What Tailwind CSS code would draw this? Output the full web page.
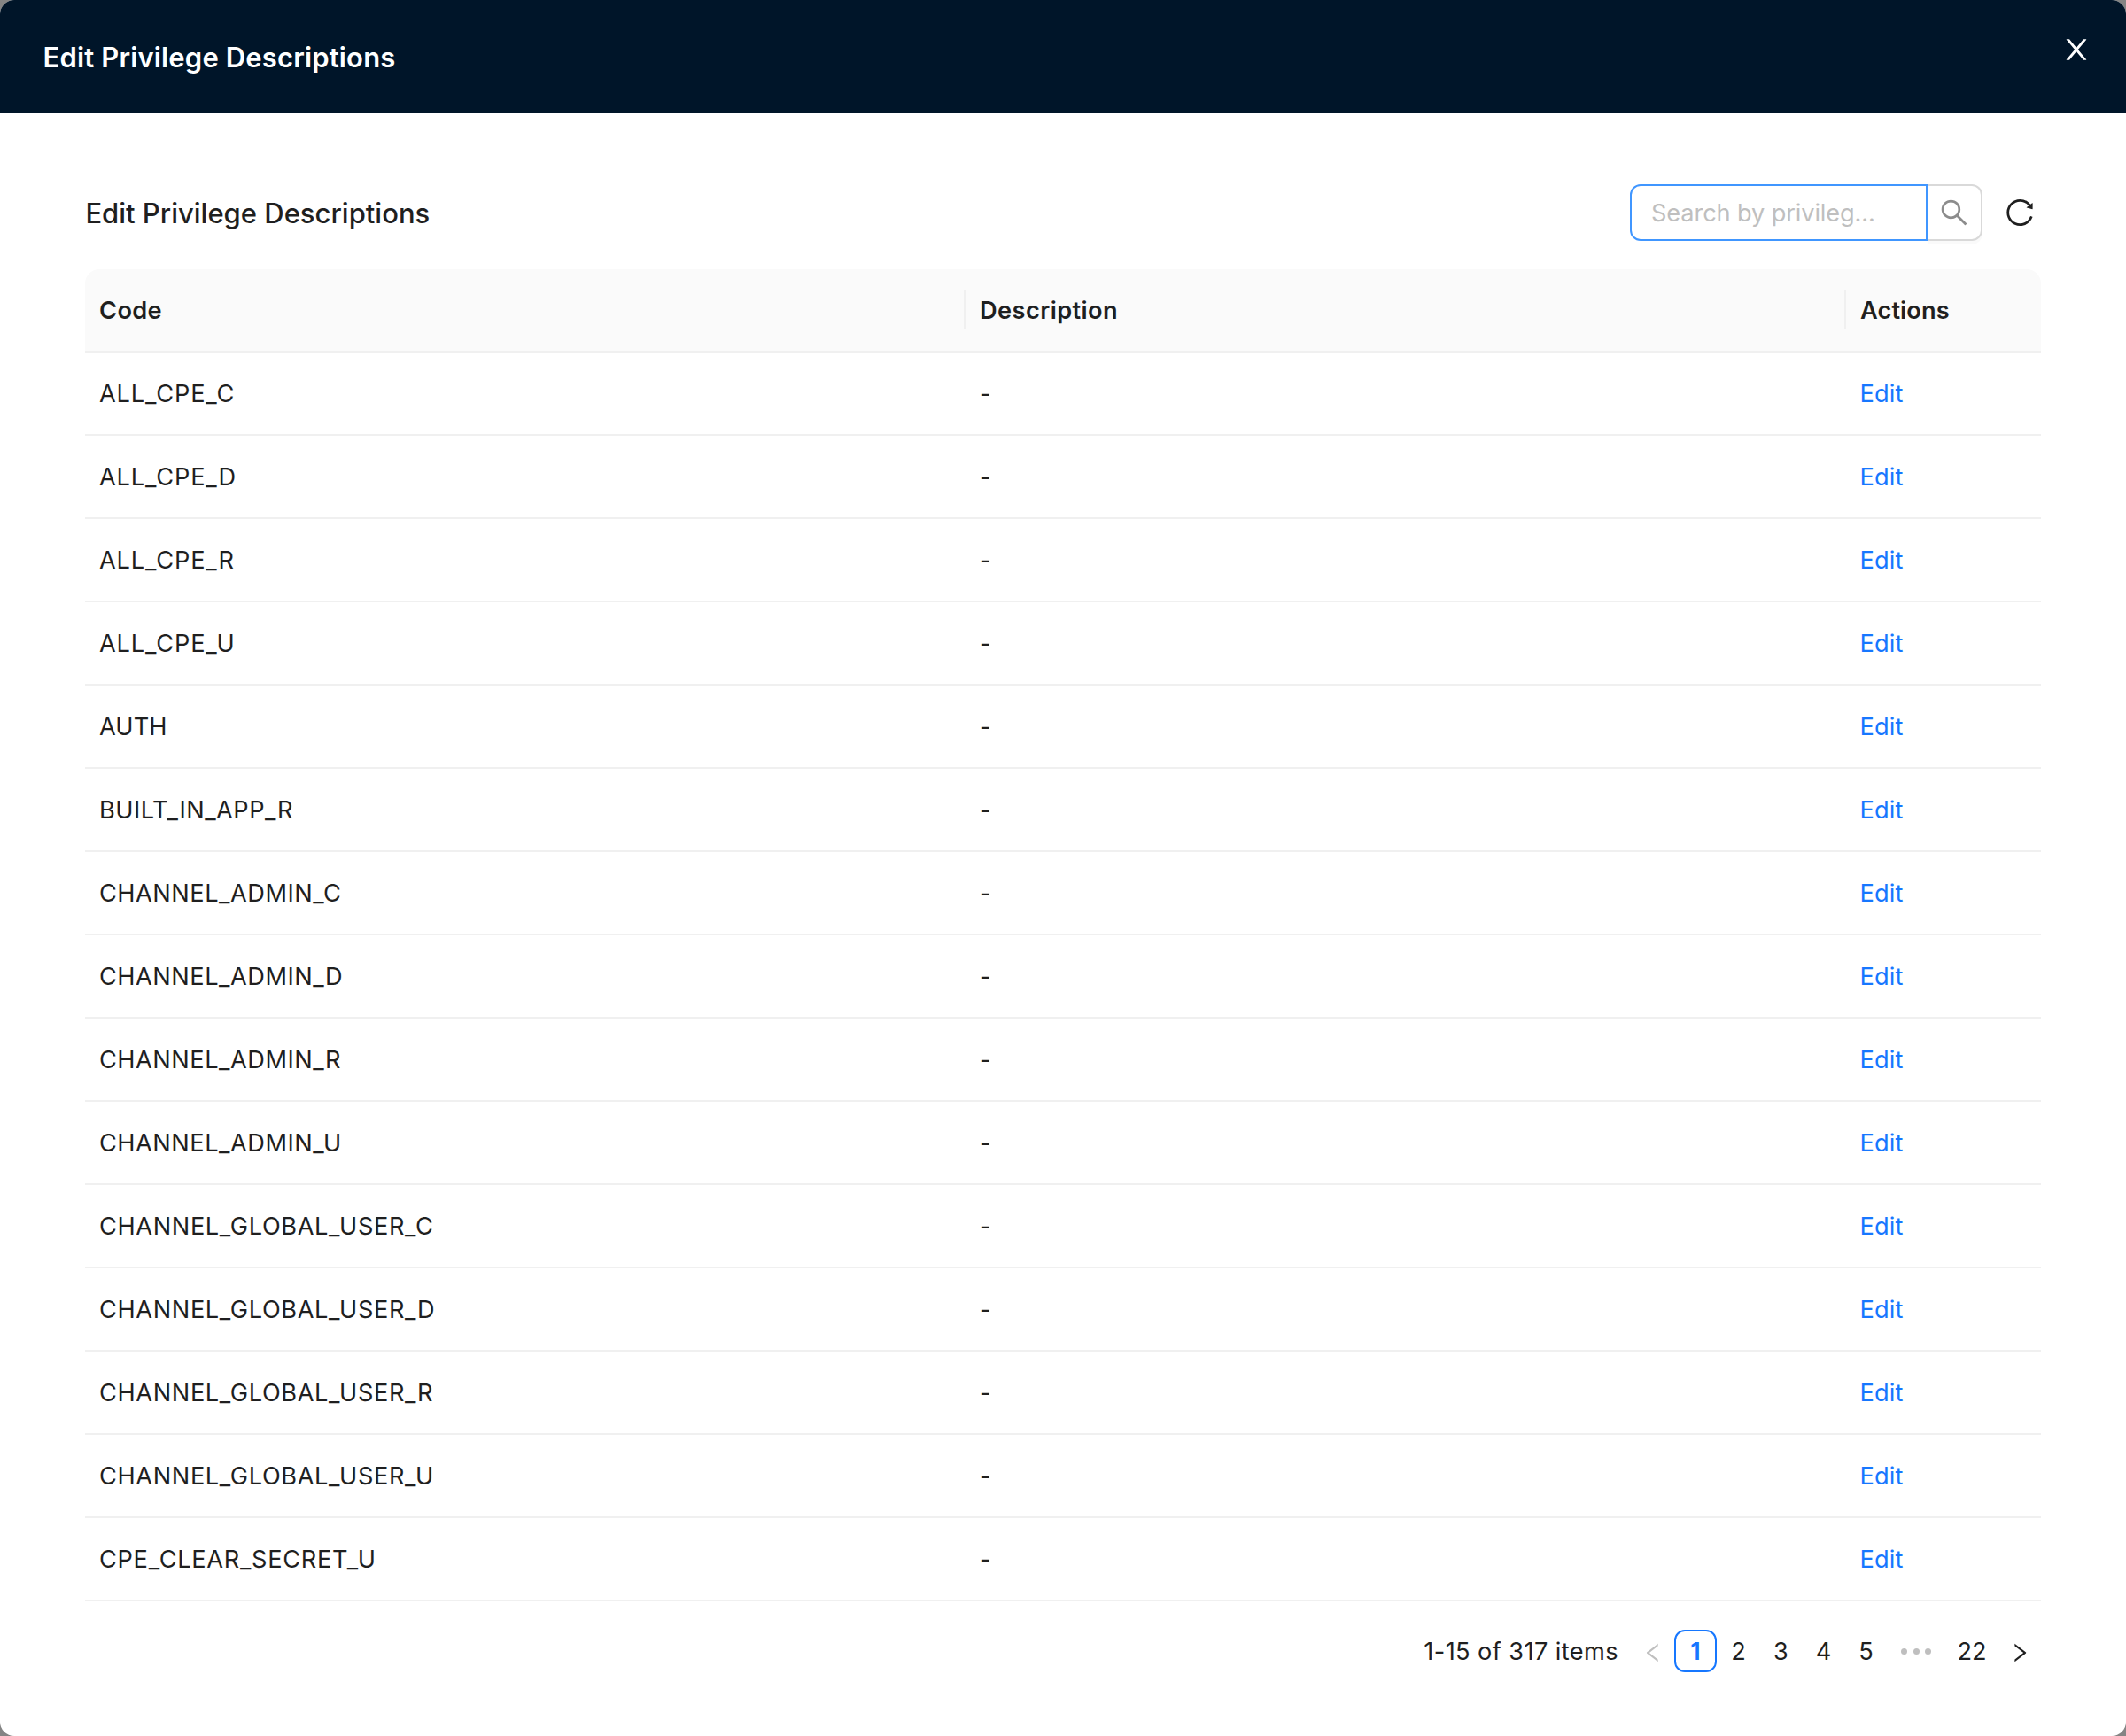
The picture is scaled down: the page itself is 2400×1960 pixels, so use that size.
<!DOCTYPE html>
<html lang="en">
<head>
<meta charset="utf-8">
<title>Edit Privilege Descriptions</title>
<script src="https://cdn.jsdelivr.net/npm/@tailwindcss/browser@4"></script>
</head>
<body class="h-[1960px] w-[2400px] overflow-hidden bg-[#848484] font-['Inter',sans-serif] text-[27.2px] leading-[44px] text-[#1f1f1f]">
<div class="flex h-full flex-col overflow-hidden rounded-2xl bg-white">

  <header class="flex h-32 shrink-0 items-center justify-between bg-[#001529] pr-10 pl-[48.6px] text-white">
    <h1 class="pt-0.5 text-[31px] font-semibold tracking-[0.15px]">Edit Privilege Descriptions</h1>
    <button class="mb-4" aria-label="Close">
      <svg class="size-8" viewBox="64 64 896 896" fill="currentColor"><path d="M563.8 512l262.5-312.9c4.4-5.2.7-13.1-6.1-13.1h-79.8c-4.7 0-9.2 2.1-12.3 5.7L511.6 449.8 295.1 191.7c-3-3.6-7.5-5.7-12.3-5.7H203c-6.8 0-10.5 7.9-6.1 13.1L459.4 512 196.9 824.9A7.95 7.95 0 00203 838h79.8c4.7 0 9.2-2.1 12.3-5.7l216.5-258.1 216.5 258.1c3 3.6 7.5 5.7 12.3 5.7h79.8c6.8 0 10.5-7.9 6.1-13.1L563.8 512z"/></svg>
    </button>
  </header>

  <main class="px-24 pt-20">
    <div class="flex h-16 items-center justify-between pr-2">
      <h2 class="pt-0.5 pl-[0.4px] text-[31px] font-medium">Edit Privilege Descriptions</h2>
      <div class="flex items-center">
        <div class="flex h-16 w-[336px] items-center rounded-l-xl border-2 border-[#4096ff] pt-0.5 pl-[22px] tracking-[-0.12px] text-[#bfbfbf]">Search by privileg...</div>
        <button class="flex h-16 w-[62px] items-center justify-center rounded-r-xl border-2 border-l-0 border-[#d9d9d9] text-[#8c8c8c] shadow-[0_4px_0_rgba(0,0,0,0.02)]" aria-label="Search">
          <svg class="size-8" viewBox="64 64 896 896" fill="currentColor"><path d="M909.6 854.5L649.9 594.8C690.2 542.7 712 479 712 412c0-80.2-31.3-155.4-87.9-212.1-56.6-56.7-132-87.9-212.1-87.9s-155.5 31.3-212.1 87.9C143.2 256.5 112 331.8 112 412c0 80.1 31.3 155.5 87.9 212.1C256.5 680.8 331.8 712 412 712c67 0 130.6-21.8 182.7-62l259.7 259.6a8.2 8.2 0 0011.6 0l43.6-43.5a8.2 8.2 0 000-11.6zM570.4 570.4C528 612.7 471.8 636 412 636s-116-23.3-158.4-65.6C211.3 528 188 471.8 188 412s23.3-116.1 65.6-158.4C296 211.3 352.2 188 412 188s116.1 23.2 158.4 65.6S636 352.2 636 412s-23.3 116.1-65.6 158.4z"/></svg>
        </button>
        <button class="ml-[26px]" aria-label="Reload">
          <svg class="size-8" viewBox="64 64 896 896" fill="currentColor"><path d="M909.1 209.3l-56.4 44.1C775.8 155.1 656.2 92 521.9 92 290 92 102.3 279.5 102 511.5 101.7 743.7 289.8 932 521.9 932c181.3 0 335.8-115 394.6-276.1 1.5-4.2-.7-8.9-4.9-10.3l-56.7-19.5a8 8 0 00-10.1 4.8c-1.8 5-3.8 10-5.9 14.9-17.3 41-42.1 77.8-73.7 109.4A344.77 344.77 0 01655.9 829c-42.3 17.9-87.4 27-133.8 27-46.5 0-91.5-9.1-133.8-27A341.5 341.5 0 01279 755.2a342.16 342.16 0 01-73.7-109.4c-17.9-42.4-27-87.4-27-133.9s9.1-91.5 27-133.9c17.3-41 42.1-77.8 73.7-109.4 31.6-31.6 68.4-56.4 109.3-73.8 42.3-17.9 87.4-27 133.8-27 46.5 0 91.5 9.1 133.8 27a341.5 341.5 0 01109.3 73.8c9.9 9.9 19.2 20.4 27.8 31.4l-60.2 47a8 8 0 003 14.1l175.6 43c5 1.2 9.9-2.6 9.9-7.7l.8-180.9c-.1-6.6-7.8-10.3-13-6.2z"/></svg>
        </button>
      </div>
    </div>

    <div class="mt-8">
      <div class="grid h-[94px] grid-cols-[994px_994px_220px] items-center rounded-t-2xl border-b-2 border-[#f0f0f0] bg-[#fafafa] leading-[40px] font-semibold">
        <div class="mb-0.5 border-r-2 border-[#f0f0f0] pt-1 pl-4 tracking-[0.35px]">Code</div>
        <div class="mb-0.5 border-r-2 border-[#f0f0f0] pt-1 pl-4 tracking-[0.42px]">Description</div>
        <div class="mb-0.5 pt-1 pl-4 tracking-[0.1px]">Actions</div>
      </div>
      <div id="rows"></div>
    </div>

    <nav class="mt-8 flex h-12 items-center justify-end">
      <span class="mr-[15px] pt-0.5 tracking-[0.4px]">1-15 of 317 items</span>
      <span class="flex w-12 justify-center pt-1 text-[#bfbfbf]"><svg class="size-6" viewBox="64 64 896 896" fill="currentColor"><path d="M724 218.3V141c0-6.7-7.7-10.4-12.9-6.3L260.3 486.8a31.86 31.86 0 000 50.3l450.8 352.1c5.3 4.1 12.9.4 12.9-6.3v-77.3c0-4.9-2.3-9.6-6.1-12.6l-360-281 360-281.1c3.8-3 6.1-7.7 6.1-12.6z"/></svg></span>
      <span class="flex size-12 items-center justify-center rounded-xl border-2 border-[#1677ff] pt-0.5 font-semibold text-[#1677ff]">1</span>
      <span class="w-12 pt-0.5 pl-px text-center">2</span>
      <span class="w-12 pt-0.5 pl-px text-center">3</span>
      <span class="w-12 pt-0.5 pl-px text-center">4</span>
      <span class="w-12 pt-0.5 pl-px text-center">5</span>
      <span class="flex w-[66px] justify-center gap-[6.7px]"><i class="size-[7px] rounded-full bg-[#bfbfbf]"></i><i class="size-[7px] rounded-full bg-[#bfbfbf]"></i><i class="size-[7px] rounded-full bg-[#bfbfbf]"></i></span>
      <span class="w-[60px] pt-0.5 text-center">22</span>
      <span class="flex w-12 justify-center pt-1"><svg class="size-6" viewBox="64 64 896 896" fill="currentColor"><path d="M765.7 486.8L314.9 134.7A7.97 7.97 0 00302 141v77.3c0 4.9 2.3 9.6 6.1 12.6l360 281.1-360 281.1c-3.9 3-6.1 7.7-6.1 12.6V883c0 6.7 7.7 10.4 12.9 6.3l450.8-352.1a31.96 31.96 0 000-50.4z"/></svg></span>
    </nav>
  </main>
</div>
<script>
  // [privilege code, letter spacing in px]
  const privileges = [
    ['ALL_CPE_C', 0.85], ['ALL_CPE_D', 0.85], ['ALL_CPE_R', 0.85], ['ALL_CPE_U', 0.85],
    ['AUTH', 0.1],
    ['BUILT_IN_APP_R', 0.5],
    ['CHANNEL_ADMIN_C', 0.51], ['CHANNEL_ADMIN_D', 0.51], ['CHANNEL_ADMIN_R', 0.51], ['CHANNEL_ADMIN_U', 0.51],
    ['CHANNEL_GLOBAL_USER_C', 0.62], ['CHANNEL_GLOBAL_USER_D', 0.62], ['CHANNEL_GLOBAL_USER_R', 0.62], ['CHANNEL_GLOBAL_USER_U', 0.62],
    ['CPE_CLEAR_SECRET_U', 0.69],
  ];
  document.getElementById('rows').innerHTML = privileges.map(([code, spacing]) => `
    <div class="grid h-[94px] grid-cols-[994px_994px_220px] items-center border-b-2 border-[#f0f0f0] pt-0.5">
      <div class="pl-4" style="letter-spacing:${spacing}px">${code}</div>
      <div class="pl-4">-</div>
      <div class="pl-[15.5px] tracking-[0.15px] text-[#1677ff]">Edit</div>
    </div>`).join('');
</script>
</body>
</html>
